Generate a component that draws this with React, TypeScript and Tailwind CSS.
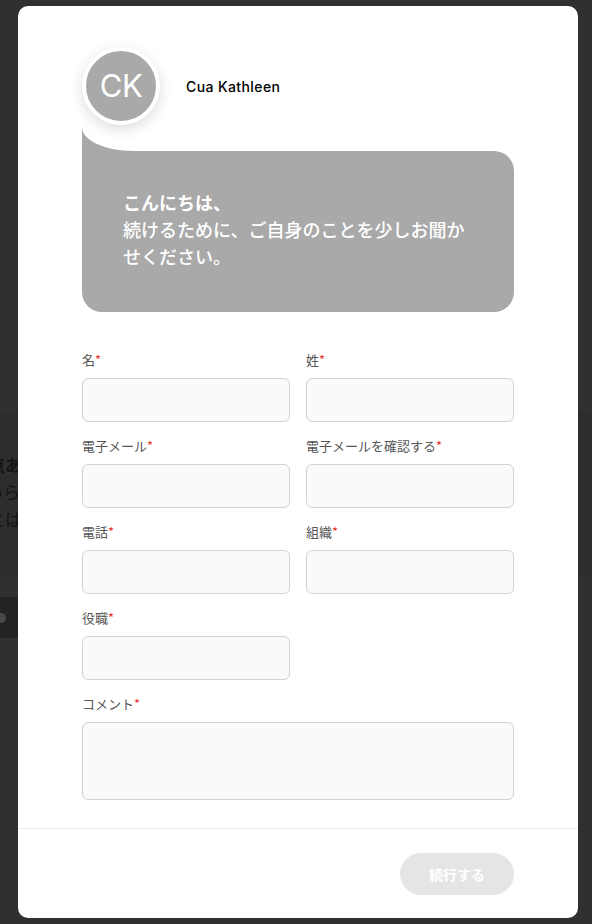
import type { ReactNode } from "react";

const jp = "font-['Noto_Sans_CJK_JP','Noto_Sans',sans-serif]";

function Field({
  label,
  className = "",
  tall = false,
}: {
  label: string;
  className?: string;
  tall?: boolean;
}) {
  return (
    <div className={`flex flex-col ${className}`}>
      <label className={`h-5 text-[13px] leading-5 text-[#555] ${jp}`}>
        {label}
        <span className="text-[#e53935]">*</span>
      </label>
      {tall ? (
        <textarea className="mt-2 h-[78px] w-full resize-none rounded-[6px] border border-[#d2d2d2] bg-[#fafafa]" />
      ) : (
        <input className="mt-2 h-[44px] w-full rounded-[6px] border border-[#d2d2d2] bg-[#fafafa]" />
      )}
    </div>
  );
}

function Backdrop({ children }: { children: ReactNode }) {
  return (
    <div className="relative h-[924px] w-[592px] overflow-hidden bg-[#303030]">
      {/* page behind the overlay */}
      <div className="flex flex-col pt-[412px]">
        <div className={`flex h-[163px] flex-col gap-[6px] bg-[#2d2d2d] pt-[42px] text-[17px] leading-[21px] text-[#141414] ${jp}`}>
          <span className="-ml-[12px] font-bold">点あり</span>
          <span className="-ml-[14px]">いらし</span>
          <span className="-ml-[12px]">とはい</span>
        </div>
        <div className="mt-[22px] flex h-[41px] w-[120px] -translate-x-[10px] items-center rounded-[14px] bg-[#232323] pl-[6px]">
          <span className="h-[10px] w-[10px] rounded-full bg-[#4a4a4a]" />
        </div>
      </div>
      {children}
    </div>
  );
}

export default function App() {
  return (
    <Backdrop>
      <div className="absolute left-[18px] top-[6px] flex h-[912px] w-[560px] flex-col rounded-[10px] bg-white">
        <div className="flex flex-col px-[64px] pt-[41px]">
          <div className="flex items-center gap-[26px]">
            <div className="relative z-10 flex h-[78px] w-[78px] items-center justify-center rounded-full border-4 border-white bg-[#a9a9a9] shadow-[0_4px_14px_rgba(0,0,0,0.14)]">
              <span className="font-['Inter',sans-serif] text-[31px] font-normal tracking-[-0.5px] text-white">
                CK
              </span>
            </div>
            <span className="font-['Inter',sans-serif] text-[14px] font-medium tracking-[0.4px] text-black">
              Cua Kathleen
            </span>
          </div>

          <div className="mt-[2px] flex flex-col">
            <div className="h-[24px] w-[51px] bg-[#a9a9a9]">
              <div className="h-full w-full rounded-bl-[51px_24px] bg-white" />
            </div>
            <div className={`rounded-b-[20px] rounded-tr-[20px] bg-[#a9a9a9] pb-[42px] pl-[41px] pr-[41px] pt-[38px] text-[18px] leading-[27px] text-white ${jp}`}>
              <p className="font-bold">こんにちは、</p>
              <p className="font-medium">続けるために、ご自身のことを少しお聞かせください。</p>
            </div>
          </div>

          <div className="mt-[38px] grid grid-cols-2 gap-x-4 gap-y-[14px]">
            <Field label="名" />
            <Field label="姓" />
            <Field label="電子メール" />
            <Field label="電子メールを確認する" />
            <Field label="電話" />
            <Field label="組織" />
            <Field label="役職" />
            <div />
            <Field label="コメント" className="col-span-2" tall />
          </div>
        </div>

        <div className="mt-[28px] border-t border-[#ececec]" />
        <div className="flex justify-end px-[64px] pt-[24px]">
          <button
            className={`h-[42px] w-[114px] rounded-full bg-[#e5e5e5] text-[14px] font-bold text-white ${jp}`}
          >
            続行する
          </button>
        </div>
      </div>
    </Backdrop>
  );
}
